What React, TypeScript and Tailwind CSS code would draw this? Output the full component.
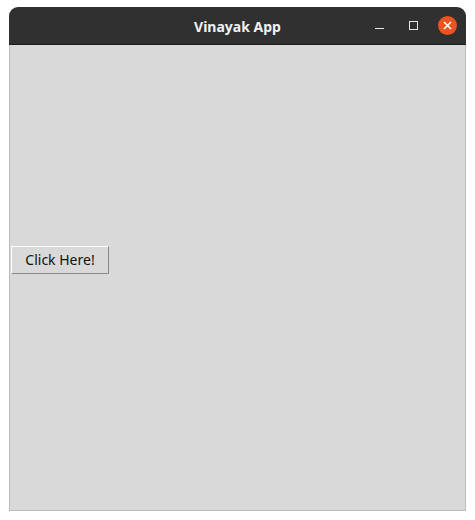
import React from 'react';

export default function App() {
    return (
        <div className="w-[475px] h-[520px] bg-white pt-[7px] pl-[9px]">
            <div className="w-[457px] flex flex-col">
                {/* Titelleiste */}
                <div className="relative h-[38px] bg-[#303030] rounded-t-[9px] border-b border-[#1e1e1e] flex items-center justify-center">
                    <span className="text-[14px] font-bold text-[#f2f2f2] font-['Noto_Sans',sans-serif] mt-[1px]">Vinayak App</span>
                    <div className="absolute right-[2px] top-0 h-full flex items-center">
                        <div className="w-[34px] h-[20px] flex items-center justify-center">
                            <div className="w-[9px] h-[1px] bg-[#e6e6e6] mt-[6px]" />
                        </div>
                        <div className="w-[34px] h-[20px] flex items-center justify-center">
                            <div className="w-[9px] h-[9px] border border-[#e6e6e6]" />
                        </div>
                        <div className="w-[34px] h-[20px] flex items-center justify-center">
                            <div className="w-[19px] h-[19px] rounded-full bg-[#e95420] flex items-center justify-center">
                                <svg width="9" height="9" viewBox="0 0 9 9">
                                    <path d="M1 1 L8 8 M8 1 L1 8" stroke="#ffffff" strokeWidth="1.5" />
                                </svg>
                            </div>
                        </div>
                    </div>
                </div>

                {/* Inhalt */}
                <div className="h-[466px] bg-[#d9d9d9] border-x border-b border-[#bcbcbc] flex items-start">
                    <button className="ml-[1px] mt-[201px] w-[98px] h-[28px] bg-[#d9d9d9] border border-t-white border-l-white border-b-[#8a8a8a] border-r-[#8a8a8a] text-[14px] text-[#111111] font-['Noto_Sans',sans-serif] leading-none">
                        Click Here!
                    </button>
                </div>
            </div>
        </div>
    )
}
